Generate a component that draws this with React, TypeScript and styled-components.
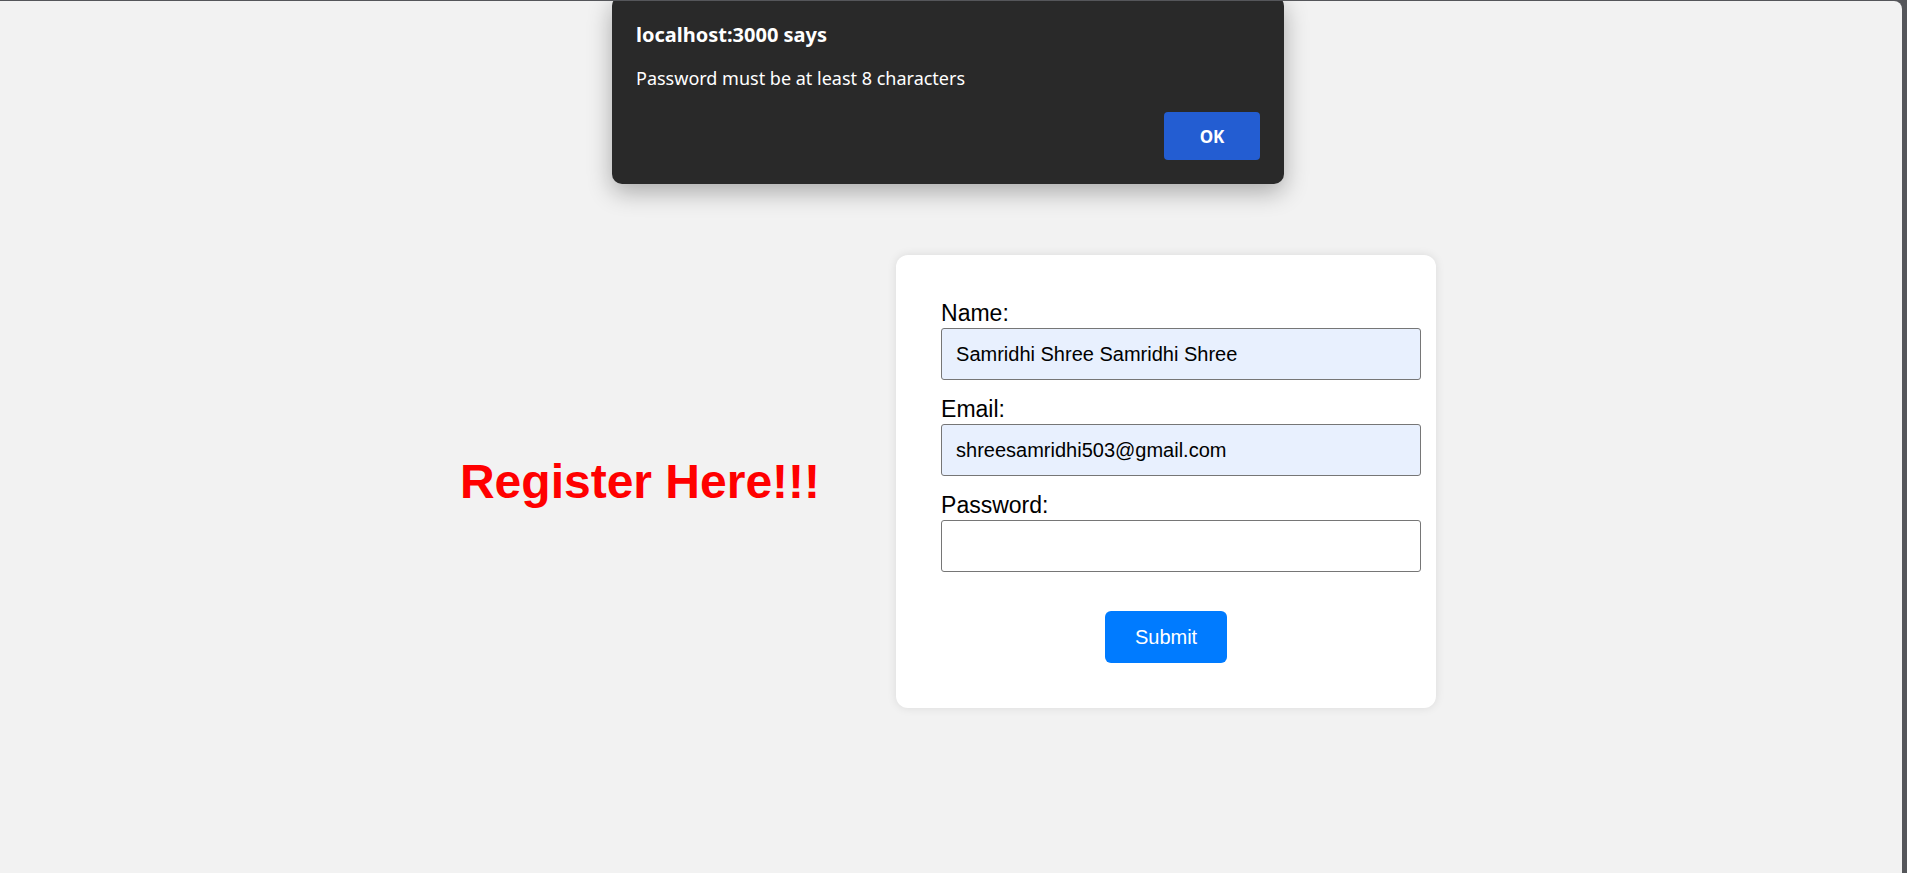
import React from "react";
import styled, { createGlobalStyle } from "styled-components";

const GlobalStyle = createGlobalStyle`
  html, body {
    margin: 0;
    padding: 0;
    background: #55565a;
  }
  body {
    font-family: "Liberation Sans", Arial, sans-serif;
  }
`;

const Frame = styled.div`
  position: relative;
  height: 872px;
  margin-top: 1px;
  margin-right: 5px;
  background: #f2f2f2;
  border-top-right-radius: 8px;
  overflow: hidden;
`;

const Page = styled.main`
  display: flex;
  align-items: center;
  justify-content: center;
  gap: 76px;
  height: 100%;
  box-sizing: border-box;
  padding: 89px 6px 0 0;
`;

const Heading = styled.h1`
  margin: 0;
  color: #ff0000;
  font-family: "Liberation Sans", Arial, sans-serif;
  font-size: 48px;
  font-weight: 700;
  line-height: 1.15;
  white-space: nowrap;
`;

const Card = styled.section`
  width: 450px;
  padding: 45px;
  background: #ffffff;
  border-radius: 12px;
  box-shadow: 0 0 10px rgba(0, 0, 0, 0.1);
`;

const Form = styled.form`
  display: flex;
  flex-direction: column;
`;

const Label = styled.label`
  display: block;
  font-size: 23px;
  line-height: 27px;
  color: #000;
  margin-bottom: 1px;
`;

const Input = styled.input<{ $filled?: boolean }>`
  display: block;
  box-sizing: border-box;
  width: calc(100% + 30px);
  height: 52px;
  margin: 0 0 16px;
  padding: 0 14px;
  font-family: "Liberation Sans", Arial, sans-serif;
  font-size: 20px;
  color: #000;
  background: ${(p) => (p.$filled ? "#e8f0fe" : "#ffffff")};
  border: 1px solid #767676;
  border-radius: 3px;
  outline: none;
`;

const Actions = styled.div`
  display: flex;
  justify-content: center;
  margin-top: 23px;
`;

const SubmitButton = styled.button`
  height: 52px;
  padding: 0 30px;
  background: #007bff;
  color: #ffffff;
  border: none;
  border-radius: 6px;
  font-family: "Liberation Sans", Arial, sans-serif;
  font-size: 20px;
  cursor: pointer;
`;

const Dialog = styled.div`
  position: absolute;
  top: -5px;
  left: 612px;
  width: 672px;
  height: 188px;
  box-sizing: border-box;
  padding: 26px 24px 23px;
  display: flex;
  flex-direction: column;
  background: #292929;
  border-radius: 10px;
  box-shadow: 0 8px 24px rgba(0, 0, 0, 0.3);
  font-family: "Noto Sans", "Open Sans", sans-serif;
  color: #ffffff;
`;

const DialogTitle = styled.div`
  font-size: 20px;
  line-height: 26px;
  font-weight: 700;
`;

const DialogMessage = styled.div`
  margin-top: 18px;
  font-size: 18px;
  line-height: 24px;
`;

const DialogActions = styled.div`
  display: flex;
  justify-content: flex-end;
  margin-top: 22px;
`;

const OkButton = styled.button`
  width: 96px;
  height: 48px;
  background: #235dd2;
  color: #ffffff;
  border: none;
  border-radius: 4px;
  font-family: "Noto Sans", "Open Sans", sans-serif;
  font-size: 17px;
  font-weight: 700;
`;

export default function App() {
  return (
    <>
      <GlobalStyle />
      <Frame>
        <Page>
          <Heading>Register Here!!!</Heading>
          <Card>
            <Form onSubmit={(e) => e.preventDefault()}>
              <Label htmlFor="name">Name:</Label>
              <Input id="name" type="text" $filled defaultValue="Samridhi Shree Samridhi Shree" />
              <Label htmlFor="email">Email:</Label>
              <Input id="email" type="email" $filled defaultValue="shreesamridhi503@gmail.com" />
              <Label htmlFor="password">Password:</Label>
              <Input id="password" type="password" />
              <Actions>
                <SubmitButton type="submit">Submit</SubmitButton>
              </Actions>
            </Form>
          </Card>
        </Page>
        <Dialog role="alertdialog">
          <DialogTitle>localhost:3000 says</DialogTitle>
          <DialogMessage>Password must be at least 8 characters</DialogMessage>
          <DialogActions>
            <OkButton>OK</OkButton>
          </DialogActions>
        </Dialog>
      </Frame>
    </>
  );
}
